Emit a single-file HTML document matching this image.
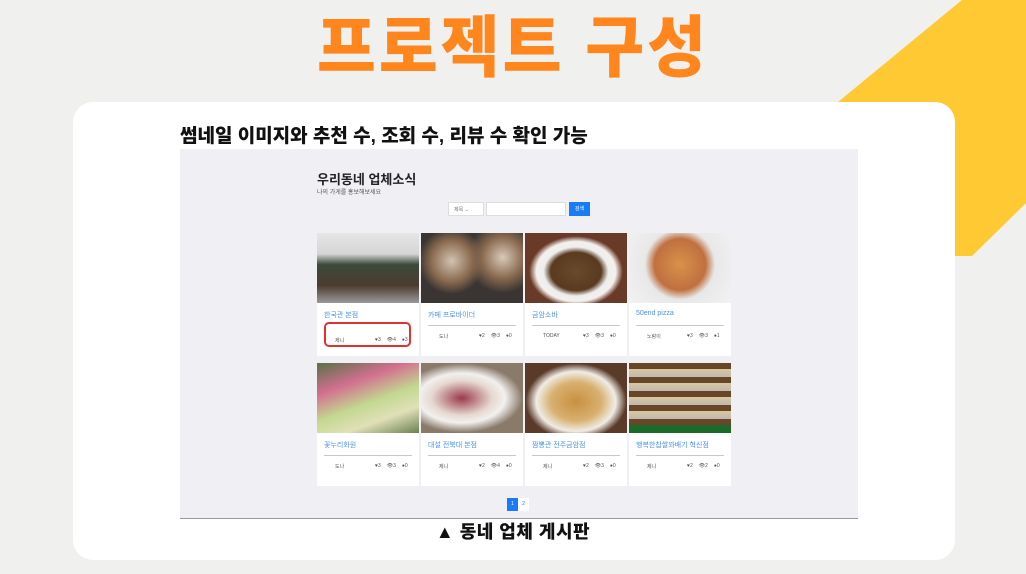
<!DOCTYPE html>
<html><head><meta charset="utf-8"><style>
*{margin:0;padding:0;box-sizing:border-box}
body{width:1026px;height:574px;background:#f0f0ee;position:relative;overflow:hidden;font-family:"Liberation Sans","Noto Sans CJK KR",sans-serif}
.h1{position:absolute;left:0;width:1026px;top:4px;text-align:center;font-size:64px;font-weight:900;color:#ff861d;letter-spacing:3px;line-height:88px;transform:scaleY(1.05)}
.card{position:absolute;left:73px;top:102px;width:882px;height:458px;background:#fff;border-radius:20px}
.sub{position:absolute;left:180px;top:121px;font-size:19px;font-weight:900;color:#111;letter-spacing:0}
.shot{position:absolute;left:180px;top:149px;width:678px;height:370px;background:#f0eff4;border-bottom:1px solid #999}
.t1{position:absolute;left:137px;top:20px;font-size:13px;font-weight:700;color:#222}
.t2{position:absolute;left:137px;top:38px;font-size:6px;color:#555}
.sel{position:absolute;left:268px;top:53px;width:36px;height:14px;background:#fff;border:1px solid #ddd;font-size:5px;color:#777;padding:3px 5px}
.inp{position:absolute;left:306px;top:53px;width:80px;height:14px;background:#fff;border:1px solid #ddd}
.btn{position:absolute;left:389px;top:53px;width:21px;height:14px;background:#1a7cf5;color:#fff;font-size:5px;text-align:center;line-height:14px}
.it{position:absolute;width:102px;height:123px;background:#fff}
.im{height:70px}
.nm{font-size:7px;color:#4a93e8;padding:7px 0 0 7px;height:22px}
.ln{margin:0 7px;border-top:1px solid #c8c8c8}
.mt{font-size:5px;color:#555;padding:7px 0 0 18px;display:flex}
.mt span:first-child{width:34px}
.mt span{margin-right:6px}
.pg{position:absolute;top:349px;height:13px;width:11px;font-size:5px;text-align:center;line-height:13px}
.cap{position:absolute;left:0;width:1026px;top:518px;text-align:center;font-size:18px;font-weight:900;color:#111;letter-spacing:0.5px}
</style></head><body>
<svg style="position:absolute;left:0;top:0" width="1026" height="574"><polygon points="962,0 1026,0 1026,203 972,256 900,256 838,102" fill="#fec932"/></svg>
<div class="h1">프로젝트 구성</div>
<div class="card"></div>
<div class="sub">썸네일 이미지와 추천 수, 조회 수, 리뷰 수 확인 가능</div>
<div class="shot">
<div class="t1">우리동네 업체소식</div>
<div class="t2">나의 가게를 홍보해보세요</div>
<div class="sel">제목 ⌄</div><div class="inp"></div><div class="btn">검색</div>

<div class="it" style="left:137px;top:84px"><div class="im" style="background:linear-gradient(#e6e6e6 0,#d5d5d5 30%,#3b4a3a 45%,#4d3b30 75%,#9a9a9a 100%)"></div><div class="nm">한국관 본점</div><div class="mt" style="padding-top:12px"><span>제니</span><span>♥3</span><span>👁4</span><span>●3</span></div></div>
<div class="it" style="left:241px;top:84px"><div class="im" style="background:radial-gradient(circle at 30% 40%,#d2c2b0 0,#8a6a50 25%,transparent 40%),radial-gradient(circle at 80% 35%,#d8cab8 0,#8a6a50 22%,transparent 38%),#3a3532"></div><div class="nm">카페 프로바이더</div><div class="ln"></div><div class="mt"><span>도나</span><span>♥2</span><span>👁3</span><span>●0</span></div></div>
<div class="it" style="left:345px;top:84px"><div class="im" style="background:radial-gradient(ellipse at 50% 55%,#6a4a2a 0,#5a3a20 35%,#eee 45%,#f4f0ec 55%,#6a3a28 65%)"></div><div class="nm">금암소바</div><div class="ln"></div><div class="mt"><span>TODAY</span><span>♥3</span><span>👁3</span><span>●0</span></div></div>
<div class="it" style="left:449px;top:84px"><div class="im" style="background:radial-gradient(circle at 50% 45%,#d8924a 0,#c07040 40%,#e8e8e8 55%,#f2f2f2)"></div><div class="nm">50end pizza</div><div class="ln"></div><div class="mt"><span>노랑이</span><span>♥3</span><span>👁3</span><span>●1</span></div></div>

<div class="it" style="left:137px;top:214px"><div class="im" style="background:linear-gradient(160deg,#5a7048,#d27090 30%,#c3d890 55%,#e0e0b8 75%,#6a8050)"></div><div class="nm">꽃누리화원</div><div class="ln"></div><div class="mt"><span>도나</span><span>♥3</span><span>👁3</span><span>●0</span></div></div>
<div class="it" style="left:241px;top:214px"><div class="im" style="background:radial-gradient(ellipse at 40% 50%,#9a3a4a 0,#e6d8d0 35%,#f2f0ee 50%,#8a7a6a 70%)"></div><div class="nm">대설 전북대 본점</div><div class="ln"></div><div class="mt"><span>제니</span><span>♥2</span><span>👁4</span><span>●0</span></div></div>
<div class="it" style="left:345px;top:214px"><div class="im" style="background:radial-gradient(ellipse at 50% 55%,#c89040 0,#d8b070 35%,#f0ece6 55%,#5a3a28 70%)"></div><div class="nm">짬뽕관 전주금암점</div><div class="ln"></div><div class="mt"><span>제니</span><span>♥2</span><span>👁3</span><span>●0</span></div></div>
<div class="it" style="left:449px;top:214px"><div class="im" style="background:repeating-linear-gradient(#6a4628 0,#6a4628 6px,#d8c8a0 6px,#c0b8b0 14px),#6a4628;border-bottom:8px solid #1a6a2a"></div><div class="nm">행복한찹쌀꽈배기 혁신점</div><div class="ln"></div><div class="mt"><span>제니</span><span>♥2</span><span>👁2</span><span>●0</span></div></div>

<div style="position:absolute;left:144px;top:173px;width:87px;height:25px;border:2px solid #e53030;border-radius:5px"></div>
<div class="pg" style="left:327px;background:#1a7cf5;color:#fff">1</div>
<div class="pg" style="left:338px;background:#fff;color:#1a7cf5">2</div>
</div>
<div class="cap">▲ 동네 업체 게시판</div>
</body></html>
